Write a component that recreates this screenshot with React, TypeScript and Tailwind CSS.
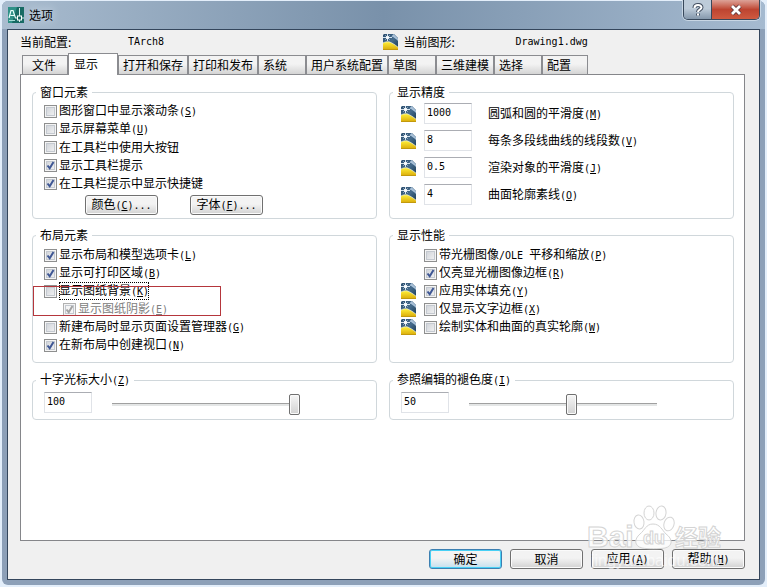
import type { ReactNode } from 'react';

const TABS = ['文件', '显示', '打开和保存', '打印和发布', '系统', '用户系统配置', '草图', '三维建模', '选择', '配置'];

function Mono({ children }: { children: ReactNode }) {
  return <span className="font-['DejaVu_Sans_Mono',monospace] text-[10px]">{children}</span>;
}

function Key({ k, after = '' }: { k: string; after?: string }) {
  return (
    <Mono>
      (<u className="underline-offset-1">{k}</u>){after}
    </Mono>
  );
}

function DrawingIcon() {
  return (
    <svg width="15" height="16" viewBox="0 0 15 16" className="shrink-0" aria-hidden="true">
      <defs>
        <linearGradient id="page" x1="0" y1="0" x2="1" y2="1">
          <stop offset="0" stopColor="#2d4f70" />
          <stop offset="0.5" stopColor="#456b8c" />
          <stop offset="1" stopColor="#17364f" />
        </linearGradient>
        <linearGradient id="yellow" x1="0" y1="0" x2="0" y2="1">
          <stop offset="0" stopColor="#fff03a" />
          <stop offset="1" stopColor="#d9a908" />
        </linearGradient>
      </defs>
      <path d="M1 0h10l4 4v12H0V1z" fill="url(#page)" />
      <path d="M10.500 0L15 4.500V7C13 5 11.500 3.500 8.500 2.500z" fill="#a9c1d8" />
      <path d="M0 9C1.500 8 4 7.700 6 7.800c3 1 6 3 9 5.400V16H0z" fill="url(#yellow)" />
      <path d="M0 9C1.500 8 4 7.700 6 7.800c3 1 6 3 9 5.400" fill="none" stroke="#f4f7e8" strokeWidth="0.7" />
      <path d="M4.500 0v7M0 3.500h9M2.500 1.500l4 4M6.500 1.500l-4 4" stroke="#e9f3fb" strokeWidth="0.9" />
      <circle cx="4.500" cy="3.500" r="1.300" fill="#fff" />
      <path d="M0 15.600h15" stroke="#b8900f" strokeWidth="0.8" />
    </svg>
  );
}

function AppIcon() {
  return (
    <svg width="16" height="16" viewBox="0 0 16 16" aria-hidden="true">
      <rect width="16" height="16" fill="#176a63" />
      <path d="M0 0h9L4 16H0z" fill="#2f9187" />
      <path d="M1 11L3 3.500h2L7.500 11M2.500 8.500h4" fill="none" stroke="#e8fffb" strokeWidth="1.200" />
      <path d="M11.500 1v14M7 11h9" stroke="#d9efec" strokeWidth="1" />
      <rect x="9.500" y="9" width="4" height="4" fill="#176a63" stroke="#fff" strokeWidth="1" />
      <path d="M1 13.500h6" stroke="#a5dcd4" />
    </svg>
  );
}

interface CheckProps {
  text: ReactNode;
  k?: string;
  checked?: boolean;
  disabled?: boolean;
  focused?: boolean;
}

function Check({ text, k, checked = false, disabled = false, focused = false }: CheckProps) {
  return (
    <label className={`flex h-[18px] w-fit items-center gap-[2px] ${disabled ? 'text-[#808080]' : ''}`}>
      <span className="grid">
        <input
          type="checkbox"
          defaultChecked={checked}
          disabled={disabled}
          className="peer col-start-1 row-start-1 size-[13px] appearance-none border border-[#8e8f8f] bg-linear-to-br from-[#cbcfd5] to-[#f6f6f6] shadow-[inset_0_0_0_1px_#f4f4f4,inset_0_0_0_2px_#c4c9d0] disabled:border-[#b1b1b1] disabled:from-[#f4f4f4]"
        />
        <svg
          viewBox="0 0 13 13"
          className="pointer-events-none col-start-1 row-start-1 hidden size-[13px] peer-checked:block"
          fill="none"
          stroke={disabled ? '#a2a2a2' : '#3f5794'}
          strokeWidth="2"
          aria-hidden="true"
        >
          <path d="M3.500 6.500L5.700 9.300L9.500 3" />
        </svg>
      </span>
      <span className={`whitespace-nowrap ${focused ? 'outline-1 -outline-offset-1 outline-dotted outline-black' : ''}`}>
        {text}
        {k && <Key k={k} />}
      </span>
    </label>
  );
}

function Group({ title, k, className, children }: { title: string; k?: string; className: string; children: ReactNode }) {
  return (
    <fieldset className={`min-w-0 rounded-[4px] border border-[#d0d7db] px-[11px] ${className}`}>
      <legend className="-ml-2 px-1 leading-4">
        {title}
        {k && <Key k={k} />}
      </legend>
      {children}
    </fieldset>
  );
}

function NumberBox({ id, value, label }: { id: string; value: string; label?: string }) {
  return (
    <input
      id={id}
      aria-label={label}
      defaultValue={value}
      className="h-[21px] w-12 shrink-0 border border-[#e0e3e8] border-t-[#abadb3] bg-white px-[2px] pb-[2px] font-['DejaVu_Sans_Mono',monospace] text-[10px] outline-none"
    />
  );
}

function Precision({ id, value, text, k }: { id: string; value: string; text: string; k: string }) {
  return (
    <div className="flex items-center">
      <DrawingIcon />
      <div className="mr-4 ml-2 flex">
        <NumberBox id={id} value={value} />
      </div>
      <label htmlFor={id} className="whitespace-nowrap">
        {text}
        <Key k={k} />
      </label>
    </div>
  );
}

function Slider({ label, value, position }: { label: string; value: string; position: number }) {
  return (
    <div className="flex items-start gap-5">
      <NumberBox id={label} value={value} label={label} />
      <input
        type="range"
        aria-label={label}
        defaultValue={position}
        className="mt-[2px] h-[21px] w-[188px] appearance-none bg-transparent [&::-webkit-slider-runnable-track]:h-[3px] [&::-webkit-slider-runnable-track]:border-t [&::-webkit-slider-runnable-track]:border-[#a0a0a0] [&::-webkit-slider-runnable-track]:bg-[#e4e6e6] [&::-webkit-slider-thumb]:-mt-[10px] [&::-webkit-slider-thumb]:h-[21px] [&::-webkit-slider-thumb]:w-[11px] [&::-webkit-slider-thumb]:appearance-none [&::-webkit-slider-thumb]:rounded-[2px] [&::-webkit-slider-thumb]:border [&::-webkit-slider-thumb]:border-[#707070] [&::-webkit-slider-thumb]:bg-linear-to-b [&::-webkit-slider-thumb]:from-[#f6f6f6] [&::-webkit-slider-thumb]:to-[#d2d2d2] [&::-webkit-slider-thumb]:shadow-[inset_0_0_0_1px_#fafafa]"
      />
    </div>
  );
}

function Button({ children, primary = false }: { children: ReactNode; primary?: boolean }) {
  return (
    <button
      type="button"
      className={`h-5 w-[73px] rounded-[3px] border bg-linear-to-b from-[#f3f3f3] from-45% leading-4 ${
        primary
          ? 'border-[#3c7fb1] to-[#c3dfee] shadow-[inset_0_0_0_1px_#48d0f5]'
          : 'border-[#707070] to-[#d2d2d2] shadow-[inset_0_0_0_1px_#fbfbfb]'
      }`}
    >
      {children}
    </button>
  );
}

function Watermark() {
  return (
    <svg
      viewBox="0 0 158 76"
      className="pointer-events-none absolute right-[13px] bottom-[6px] h-[76px] w-[158px]"
      fill="#ffffff"
      fillOpacity="0.75"
      stroke="#d4d4d4"
      strokeWidth="1"
      aria-hidden="true"
    >
      <ellipse cx="51" cy="25" rx="5" ry="7" transform="rotate(-8 51 25)" />
      <ellipse cx="61" cy="16" rx="5" ry="7" />
      <ellipse cx="73" cy="16" rx="5" ry="7" transform="rotate(8 73 16)" />
      <ellipse cx="81" cy="27" rx="5" ry="7" transform="rotate(18 81 27)" />
      <path d="M65 27c7 0 9 6 13 10 7 5 7 12-1 14-5 1-18 1-23 0-8-2-8-9-2-14 5-4 6-10 13-10z" />
      <text x="-1" y="50" fontFamily="Liberation Sans, sans-serif" fontWeight="700" fontSize="30">Bai</text>
      <text x="55" y="47" fontFamily="Liberation Sans, sans-serif" fontWeight="700" fontSize="18">du</text>
      <text x="87" y="49" fontFamily="Noto Sans CJK SC, sans-serif" fontWeight="700" fontSize="23">经验</text>
      <text x="3" y="69" fontFamily="Liberation Sans, sans-serif" fontSize="16" fillOpacity="0.6" stroke="none">jingyan.baidu.com</text>
    </svg>
  );
}

export default function App() {
  return (
    <div className="flex min-h-screen flex-col bg-[#e3eefa] px-[2px] pt-px pb-[2px] font-['Noto_Sans_CJK_SC',sans-serif] text-[12px] leading-4 text-black">
      <div className="flex flex-1 flex-col rounded-[6px] bg-[#8da0b8] px-[5px] pb-[5px]">
        <header className="-mx-[5px] flex h-7 shrink-0 items-center rounded-t-[6px] bg-linear-to-r from-[#a9bccf] via-[#7991aa] to-[#a5bad0] pl-[6px]">
          <AppIcon />
          <h1 className="pr-8 pl-[5px] [text-shadow:0_0_8px_#e6eff8]">选项</h1>
          <div className="-mt-px mr-[5px] ml-auto flex self-start overflow-hidden rounded-b-[5px] border border-t-0 border-[#38485b] shadow-[0_0_0_1px_#c8d6e4]">
            <button
              type="button"
              aria-label="帮助"
              className="flex h-[19px] w-7 items-center justify-center border-r border-[#38485b] bg-linear-to-b from-[#bdcbd9] from-45% to-[#8598ac]"
            >
              <svg width="12" height="14" viewBox="0 0 12 14" fill="none" aria-hidden="true">
                <path d="M2.500 5c0-4 7-4 7-.5C9.500 6.500 6 6.500 6 9M6 10.500v2" stroke="#465264" strokeWidth="4" />
                <path d="M2.500 5c0-4 7-4 7-.5C9.500 6.500 6 6.500 6 9M6 10.500v2" stroke="#fff" strokeWidth="2" />
              </svg>
            </button>
            <button
              type="button"
              aria-label="关闭"
              className="flex h-[19px] w-[47px] items-center justify-center bg-linear-to-b from-[#dca298] via-[#bd4431] via-50% to-[#cf5a40]"
            >
              <svg width="14" height="12" viewBox="0 0 14 12" fill="none" aria-hidden="true">
                <path d="M3 2l8 8M11 2l-8 8" stroke="#5b3439" strokeWidth="4.500" />
                <path d="M3 2l8 8M11 2l-8 8" stroke="#fff" strokeWidth="2.800" />
              </svg>
            </button>
          </div>
        </header>

        <main className="relative flex flex-1 flex-col border border-[#34465c] bg-[#f0f0f0] pr-[14px] pl-3">
          <div className="grid h-[23px] shrink-0 grid-cols-2 items-center">
            <div className="flex items-center">
              <span className="w-27">当前配置:</span>
              <Mono>TArch8</Mono>
            </div>
            <div className="flex items-center">
              <DrawingIcon />
              <span className="w-[118px] pl-[6px]">当前图形:</span>
              <Mono>Drawing1.dwg</Mono>
            </div>
          </div>

          {/* Tabs */}
          <div role="tablist" className="relative -mb-px flex h-[22px] shrink-0 items-end pl-[2px]">
            {TABS.map((tab) =>
              tab === '显示' ? (
                <button
                  key={tab}
                  type="button"
                  role="tab"
                  aria-selected="true"
                  className="h-[22px] w-[50px] border border-b-0 border-[#8b8c90] bg-white pb-[2px] pl-[5px] text-left"
                >
                  {tab}
                </button>
              ) : (
                <button
                  key={tab}
                  type="button"
                  role="tab"
                  aria-selected="false"
                  className="h-5 min-w-12 border border-[#8b8c90] bg-linear-to-b from-[#f3f3f3] from-45% to-[#d4d4d4] pr-[4px] pl-[4px] text-left whitespace-nowrap first:min-w-[46px] first:pl-[9px] last:min-w-[46px]"
                >
                  {tab}
                </button>
              ),
            )}
          </div>

          <section role="tabpanel" className="grid flex-1 grid-cols-2 content-start gap-x-3 gap-y-2 border border-[#85868a] bg-white pt-[9px] pr-[10px] pb-2 pl-[11px]">
            <Group title="窗口元素" className="pt-[2px] pb-[3px]">
              <Check text="图形窗口中显示滚动条" k="S" />
              <Check text="显示屏幕菜单" k="U" />
              <Check text="在工具栏中使用大按钮" />
              <Check text="显示工具栏提示" checked />
              <Check text="在工具栏提示中显示快捷键" checked />
              <div className="mt-[3px] ml-[41px] flex gap-8">
                <Button>
                  颜色
                  <Key k="C" after="..." />
                </Button>
                <Button>
                  字体
                  <Key k="F" after="..." />
                </Button>
              </div>
            </Group>

            <Group title="显示精度" className="pt-[3px]">
              <div className="flex flex-col gap-[6px]">
                <Precision id="arc" value="1000" text="圆弧和圆的平滑度" k="M" />
                <Precision id="polyline" value="8" text="每条多段线曲线的线段数" k="V" />
                <Precision id="render" value="0.5" text="渲染对象的平滑度" k="J" />
                <Precision id="surface" value="4" text="曲面轮廓素线" k="O" />
              </div>
            </Group>

            <Group title="布局元素" className="pt-[3px] pb-2">
              <Check text="显示布局和模型选项卡" k="L" checked />
              <Check text="显示可打印区域" k="B" checked />
              <div className="relative">
                <Check text="显示图纸背景" k="K" focused />
                <div className="pl-[19px]">
                  <Check text="显示图纸阴影" k="E" checked disabled />
                </div>
                <div className="pointer-events-none absolute top-1 -left-[11px] h-[30px] w-[188px] border border-[#b5363c]" />
              </div>
              <Check text="新建布局时显示页面设置管理器" k="G" />
              <Check text="在新布局中创建视口" k="N" checked />
            </Group>

            <Group title="显示性能" className="pt-[3px] pb-2">
              <div className="ml-[23px]">
                <Check text={<>带光栅图像<Mono>/OLE </Mono>平移和缩放</>} k="P" />
                <Check text="仅亮显光栅图像边框" k="R" checked />
              </div>
              <div className="flex items-center gap-2">
                <DrawingIcon />
                <Check text="应用实体填充" k="Y" checked />
              </div>
              <div className="flex items-center gap-2">
                <DrawingIcon />
                <Check text="仅显示文字边框" k="X" />
              </div>
              <div className="flex items-center gap-2">
                <DrawingIcon />
                <Check text="绘制实体和曲面的真实轮廓" k="W" />
              </div>
            </Group>

            <Group title="十字光标大小" k="Z" className="pt-[3px] pb-1">
              <Slider label="十字光标大小" value="100" position={100} />
            </Group>

            <Group title="参照编辑的褪色度" k="I" className="pt-[3px] pb-1">
              <Slider label="参照编辑的褪色度" value="50" position={55} />
            </Group>
          </section>

          <footer className="flex h-[38px] shrink-0 items-start justify-end gap-2 pt-2">
            <Button primary>确定</Button>
            <Button>取消</Button>
            <Button>
              应用
              <Key k="A" />
            </Button>
            <Button>
              帮助
              <Key k="H" />
            </Button>
          </footer>
          <Watermark />
        </main>
      </div>
    </div>
  );
}
